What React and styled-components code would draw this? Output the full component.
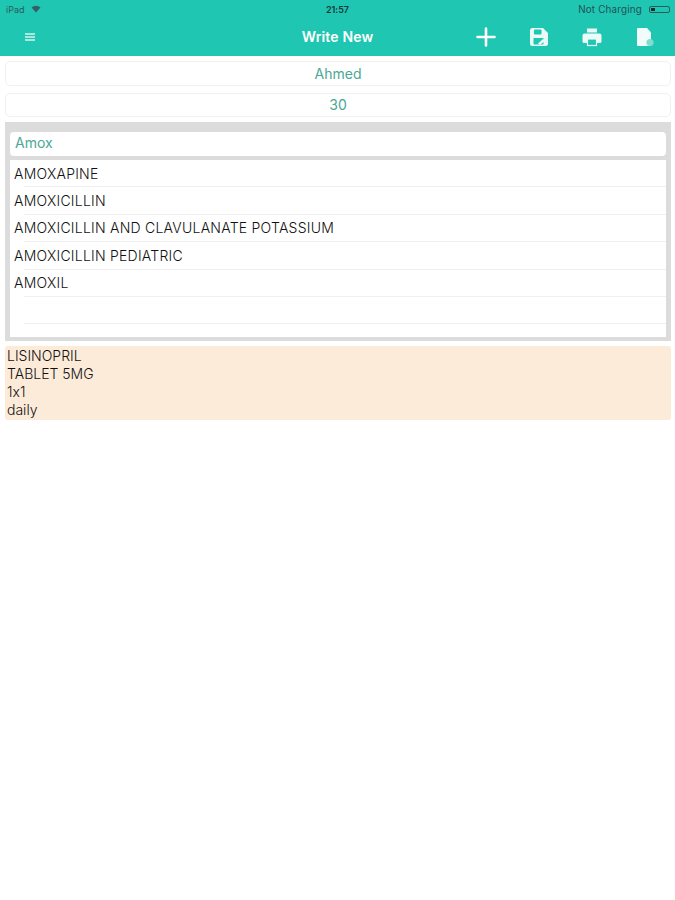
import styled, { createGlobalStyle } from "styled-components";

const GlobalStyle = createGlobalStyle`
  html, body {
    margin: 0;
    padding: 0;
    background: #fff;
    font-family: "Inter", "Liberation Sans", Arial, sans-serif;
    font-feature-settings: "calt" 0;
  }
`;

const drugs = [
  "AMOXAPINE",
  "AMOXICILLIN",
  "AMOXICILLIN AND CLAVULANATE POTASSIUM",
  "AMOXICILLIN PEDIATRIC",
  "AMOXIL",
  "",
];

export default function App() {
  return (
    <Page>
      <GlobalStyle />
      <Header>
        <StatusBar>
          <StatusLeft>
            iPad
            <svg width="10" height="8" viewBox="0 0 10 8">
              <path d="M0.5 2.6a6.4 6.4 0 0 1 9 0L5 7.6z" fill="#35606a" />
            </svg>
          </StatusLeft>
          <Clock>21:57</Clock>
          <StatusRight>
            Not Charging
            <Battery>
              <BatteryLevel />
            </Battery>
          </StatusRight>
        </StatusBar>
        <NavBar>
          <MenuIcon>
            <span />
            <span />
            <span />
          </MenuIcon>
          <NavTitle>Write New</NavTitle>
          <NavIcons>
            <svg width="20" height="20" viewBox="0 0 20 20">
              <path d="M10 1.5v17M1.5 10h17" stroke="#fff" strokeWidth="2.6" strokeLinecap="round" />
            </svg>
            <svg width="20" height="20" viewBox="0 0 20 20">
              <path
                d="M3 1h11l5 5v10.500a2.500 2.500 0 0 1-2.500 2.500h-13a2.500 2.500 0 0 1-2.500-2.500v-13a2.500 2.500 0 0 1 2-2.500z"
                fill="#e9faf7"
              />
              <rect x="5" y="2.500" width="7.500" height="5" rx="0.800" fill="#1fc6b1" />
              <rect x="4.500" y="11" width="10" height="6.500" rx="0.800" fill="#1fc6b1" />
              <path d="M9 16.500l5-4.500 2 2-5 4z" fill="#e9faf7" />
            </svg>
            <svg width="20" height="20" viewBox="0 0 20 20">
              <path d="M5 1.500h10v4H5z" fill="#e9faf7" />
              <path
                d="M2.500 6.500h15a2 2 0 0 1 2 2v6a1.500 1.500 0 0 1-1.500 1.500H2a1.500 1.500 0 0 1-1.500-1.500v-6a2 2 0 0 1 2-2z"
                fill="#e9faf7"
              />
              <rect x="5.500" y="12" width="9" height="6.500" fill="#1fc6b1" stroke="#e9faf7" strokeWidth="1.200" />
            </svg>
            <svg width="20" height="20" viewBox="0 0 20 20">
              <path d="M3 1h9l4 4.500V18a1 1 0 0 1-1 1H3a1 1 0 0 1-1-1V2a1 1 0 0 1 1-1z" fill="#f1fbfa" />
              <circle cx="15" cy="15.500" r="3.600" fill="#7fdccf" />
            </svg>
          </NavIcons>
        </NavBar>
      </Header>

      <Content>
        <TextField $height={25}>Ahmed</TextField>
        <TextField $height={24}>30</TextField>

        <SearchPanel>
          <SearchInput>Amox</SearchInput>
          <ResultList>
            {drugs.map((name, i) => (
              <ResultRow key={i}>{name}</ResultRow>
            ))}
          </ResultList>
        </SearchPanel>

        <PrescriptionCard>
          <div>LISINOPRIL</div>
          <div>TABLET 5MG</div>
          <div>1x1</div>
          <div>daily</div>
        </PrescriptionCard>
      </Content>
    </Page>
  );
}

const Page = styled.div`
  width: 675px;
  min-height: 900px;
  background: #fff;
  overflow: hidden;
`;

const Header = styled.header`
  background: #1fc6b1;
  height: 56px;
  display: flex;
  flex-direction: column;
`;

const StatusBar = styled.div`
  height: 18px;
  padding: 0 6px;
  display: grid;
  grid-template-columns: 1fr auto 1fr;
  align-items: center;
  font-size: 9px;
  color: #2c5a60;
`;

const StatusLeft = styled.div`
  display: flex;
  align-items: center;
  gap: 6px;
`;

const Clock = styled.div`
  font-weight: 600;
  color: #17393b;
`;

const StatusRight = styled.div`
  display: flex;
  justify-content: flex-end;
  align-items: center;
  gap: 7px;
  font-size: 9.8px;
  letter-spacing: 0.2px;
  color: #24505a;
`;

const Battery = styled.div`
  width: 21px;
  height: 7px;
  border: 1px solid #2c5a60;
  border-radius: 2px;
  box-sizing: border-box;
  padding: 1px;
  margin-right: -1px;
`;

const BatteryLevel = styled.div`
  width: 4px;
  height: 100%;
  background: #12292b;
`;

const NavBar = styled.div`
  flex: 1;
  position: relative;
  display: flex;
  align-items: center;
  justify-content: space-between;
  padding: 0 20px 0 25px;
  margin-top: -1px;
`;

const MenuIcon = styled.div`
  width: 10px;
  display: flex;
  flex-direction: column;
  gap: 1px;

  span {
    display: block;
    height: 2px;
    background: #a8e8de;
  }
`;

const NavTitle = styled.div`
  position: absolute;
  left: 0;
  right: 0;
  text-align: center;
  color: #fff;
  font-size: 14px;
  font-weight: 600;
  letter-spacing: 0.15px;
`;

const NavIcons = styled.div`
  display: flex;
  gap: 33px;
`;

const Content = styled.main`
  padding: 5px 4px 0 5px;
  display: flex;
  flex-direction: column;
`;

const TextField = styled.div`
  height: ${(p) => p.$height}px;
  margin-bottom: 7px;
  box-sizing: border-box;
  border: 1px solid #f1f1f1;
  border-radius: 5px;
  display: flex;
  align-items: center;
  justify-content: center;
  padding-bottom: 1px;
  font-size: 14px;
  color: #4aa893;
`;

const SearchPanel = styled.section`
  margin-top: -2px;
  height: 219px;
  box-sizing: border-box;
  background: #dcdcdc;
  padding: 10px 5px 4px;
  display: flex;
  flex-direction: column;
  gap: 4px;
`;

const SearchInput = styled.div`
  height: 24px;
  flex: none;
  background: #fff;
  border-radius: 4px;
  display: flex;
  align-items: center;
  padding: 0 0 3px 5px;
  box-sizing: border-box;
  font-size: 14px;
  color: #4aa893;
`;

const ResultList = styled.div`
  flex: 1;
  background: #fff;
  overflow: hidden;
`;

const ResultRow = styled.div`
  height: 27.400px;
  box-sizing: border-box;
  position: relative;
  padding: 4.500px 0 0 4px;
  line-height: 17px;
  font-size: 14px;
  font-weight: 300;
  letter-spacing: 0.24px;
  color: #111;

  &::after {
    content: "";
    position: absolute;
    left: 14px;
    right: 0;
    bottom: 0;
    height: 1px;
    background: #f0f0f0;
  }
`;

const PrescriptionCard = styled.section`
  margin-top: 5px;
  height: 74px;
  box-sizing: border-box;
  background: #fcebd9;
  border-radius: 3px;
  padding: 1px 2px;
  font-size: 14px;
  font-weight: 300;
  line-height: 18px;
  color: #111;
`;
